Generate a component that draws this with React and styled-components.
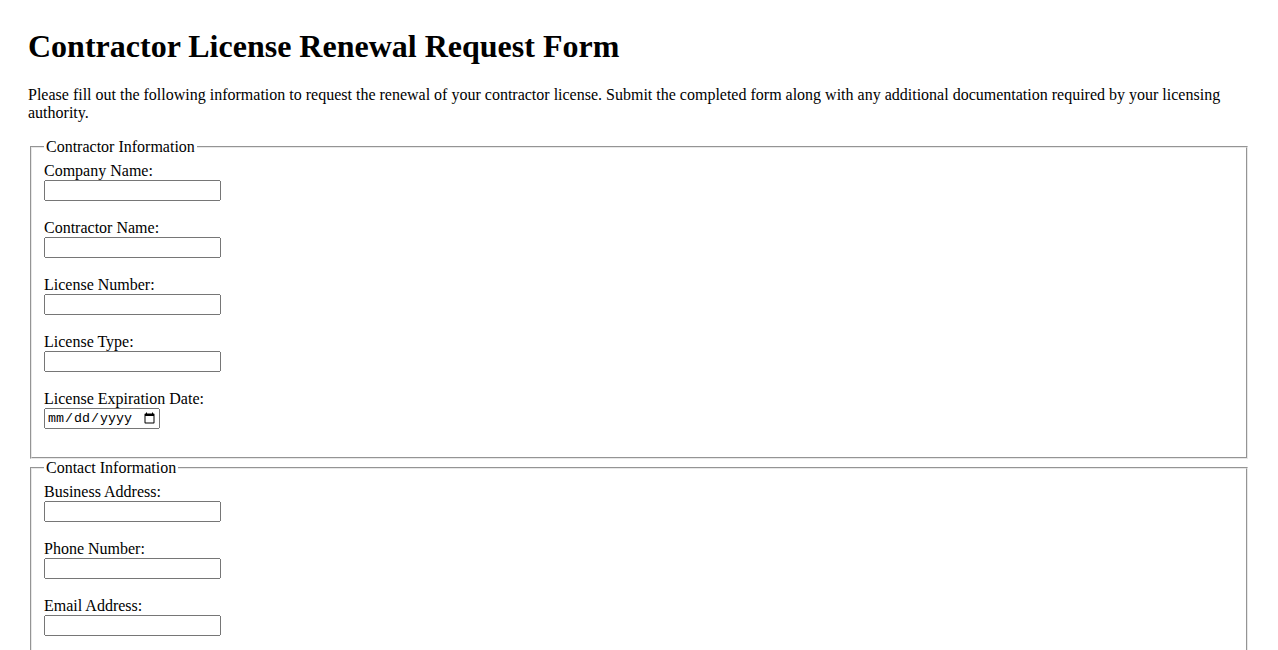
import React from "react"
import styled, { createGlobalStyle } from "styled-components"

const GlobalStyle = createGlobalStyle`
  body {
    margin: 0;
    background: #fff;
    color: #000;
    font-family: "Liberation Serif", "Times New Roman", serif;
    font-size: 16px;
  }
`

const Page = styled.div`
  padding: 28px;
`

const Title = styled.h1`
  font-size: 32px;
  font-weight: bold;
  margin: 0 0 21.44px;
`

const Intro = styled.p`
  margin: 0 0 16px;
  line-height: normal;
`

const Section = styled.fieldset`
  margin: 0 2px;
  padding: 5.6px 12px 10px;
  border: 2px groove rgb(232, 232, 232);
`

const Legend = styled.legend`
  padding: 0 2px;
`

const Label = styled.label`
  display: inline;
`

const TextInput = styled.input`
  box-sizing: border-box;
  width: 177px;
  height: 21px;
  font-family: "Liberation Sans", Arial, sans-serif;
  font-size: 13.33px;
`

const DateInput = styled.input`
  box-sizing: border-box;
  width: 116px;
  height: 21px;
  font-family: "Liberation Mono", "Courier New", monospace;
  font-size: 13.33px;
`

const Field = ({ id, label, type = "text" }) => (
  <>
    <Label htmlFor={id}>{label}</Label>
    <br />
    {type === "date" ? (
      <DateInput type="date" id={id} name={id} />
    ) : (
      <TextInput type={type} id={id} name={id} />
    )}
    <br />
    <br />
  </>
)

const App = () => {
  return (
    <Page>
      <GlobalStyle />
      <Title>Contractor License Renewal Request Form</Title>
      <Intro>
        Please fill out the following information to request the renewal of
        your contractor license. Submit the completed form along with any
        additional documentation required by your licensing authority.
      </Intro>
      <form>
        <Section>
          <Legend>Contractor Information</Legend>
          <Field id="company" label="Company Name:" />
          <Field id="contractor" label="Contractor Name:" />
          <Field id="license-number" label="License Number:" />
          <Field id="license-type" label="License Type:" />
          <Field id="expiration" label="License Expiration Date:" type="date" />
        </Section>
        <Section>
          <Legend>Contact Information</Legend>
          <Field id="address" label="Business Address:" />
          <Field id="phone" label="Phone Number:" type="tel" />
          <Field id="email" label="Email Address:" type="email" />
        </Section>
      </form>
    </Page>
  )
}

export default App
